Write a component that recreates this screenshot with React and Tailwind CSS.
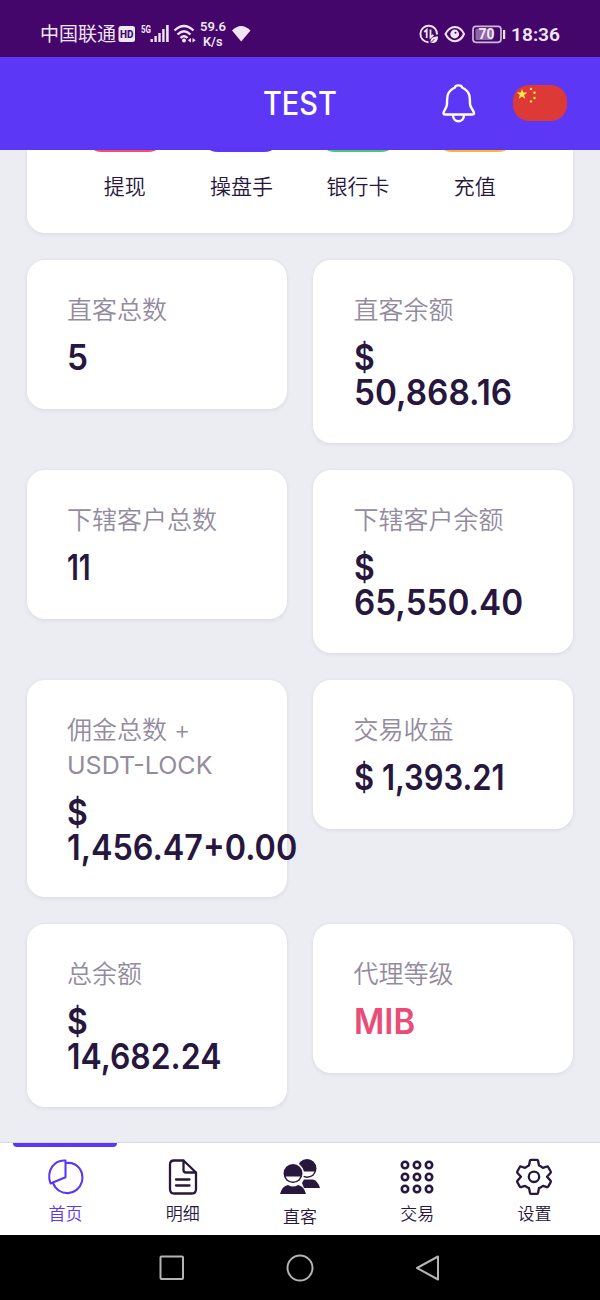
import React, { useLayoutEffect, useRef } from "react";

const cards = [
  [
    { label: ["直客总数"], value: [["5", 20]], h: "h-[149px]" },
    { label: ["直客余额"], value: [["$", 20], ["50,868.16", 157]], h: "h-[183px]" },
  ],
  [
    { label: ["下辖客户总数"], value: [["11", 23]], h: "h-[149px]" },
    { label: ["下辖客户余额"], value: [["$", 20], ["65,550.40", 168]], h: "h-[183px]" },
  ],
  [
    { label: ["佣金总数 +", "USDT-LOCK"], value: [["$", 20], ["1,456.47+0.00", 229]], h: "h-[217.4px]" },
    { label: ["交易收益"], value: [["$ 1,393.21", 150]], h: "h-[149px]" },
  ],
  [
    { label: ["总余额"], value: [["$", 20], ["14,682.24", 153]], h: "h-[183px]" },
    { label: ["代理等级"], value: [["MIB", 60]], h: "h-[149px]", pink: true },
  ],
];

/* Single line of text, scaled horizontally to a given width. */
function Fit({ text, width, className }) {
  const ref = useRef(null);
  useLayoutEffect(() => {
    const el = ref.current;
    el.style.transform = `scaleX(${width / el.offsetWidth})`;
  }, [width, text]);
  return (
    <div>
      <span ref={ref} className={`inline-block origin-left whitespace-pre align-top ${className}`}>
        {text}
      </span>
    </div>
  );
}

function Card({ card }) {
  return (
    <section className={`w-[260px] shrink-0 rounded-[18px] bg-white pl-[40.5px] pt-[33px] shadow-[0_1px_4px_rgba(39,23,62,0.10)] ${card.h}`}>
      <div className="text-[25px] font-[350] leading-[35px] text-[#938b9e]">
        {card.label.map((t) =>
          t === "USDT-LOCK" ? (
            <Fit key={t} text={t} width={145} className="text-[24.5px] font-normal leading-[35px]" />
          ) : (
            <div key={t} className="whitespace-pre">
              {t}
            </div>
          ),
        )}
      </div>
      <div className={`pt-[12px] ${card.pink ? "text-[#ea4c77]" : "text-[#27173e]"}`}>
        {card.value.map(([t, w]) => (
          <Fit key={t} text={t} width={w + 1} className="h-[35px] text-[35px] font-semibold leading-[35px]" />
        ))}
      </div>
    </section>
  );
}

function StatusBar() {
  return (
    <div className="flex h-[57px] shrink-0 bg-[#45066b] pl-[40px] pt-[22px] text-[#eee6f4]">
      <div className="w-[78px] whitespace-nowrap text-[19px] leading-[25px]">中国联通</div>
      <svg width="134" height="30" viewBox="118 22 134 30" fill="currentColor" className="overflow-visible">
        <rect x="118.500" y="26" width="16.500" height="16" rx="2.500" />
        <text x="120" y="38" fontSize="10.500" fontWeight="800" textLength="13.500" lengthAdjust="spacingAndGlyphs" fill="#45066b" fontFamily="Roboto">HD</text>
        <text x="141" y="33" fontSize="10" fontWeight="700" textLength="10" lengthAdjust="spacingAndGlyphs" fontFamily="Roboto">5G</text>
        <path d="M150.500 39h2.400v3h-2.400zM154.400 36h2.400v6h-2.400zM158.300 33h2.400v9h-2.400zM162.200 29h2.400v13h-2.400zM166.100 25h2.600v17h-2.600z" />
        <g fill="none" stroke="currentColor" strokeWidth="2.300">
          <path d="M174.500 30.500Q184 21.500 193.500 30.500M177.500 34.500Q184 28 190.500 34.500M180.500 38Q184 34.500 187.500 38" />
        </g>
        <circle cx="184" cy="40.500" r="2" />
        <path d="m191 38-3.200 2.200 3.200 2.200zm1.500 0 3.200 2.200-3.200 2.200z" />
        <g fontSize="12.500" fontWeight="600" fontFamily="Roboto">
          <text x="200" y="31" textLength="26" lengthAdjust="spacingAndGlyphs">59.6</text>
          <text x="203" y="46" textLength="19.500" lengthAdjust="spacingAndGlyphs">K/s</text>
        </g>
        <path d="M232 30.500Q241 21.500 250.500 30.500L241.200 41.500Z" />
      </svg>
      <svg width="145" height="30" viewBox="418 22 145 30" fill="currentColor" className="ml-[166px]">
        <path d="M437 34.500A8.300 8.300 0 1 0 428.500 42.300" fill="none" stroke="currentColor" strokeWidth="1.900" />
        <path d="m424.300 32 2.400-2.200V38M430.500 29.500v8l2.900-2.700" fill="none" stroke="currentColor" strokeWidth="1.800" />
        <path d="M430.500 43c-.500-4.500 2-6.500 7.500-6.500 0 5-2.500 7-7.500 6.500Z" />
        <path d="m430 43.500 4.500-4.500" stroke="#45066b" strokeWidth=".8" />
        <path d="M445.500 34C450 24.500 460 24.500 464 34 460 43.500 450 43.500 445.500 34Z" fill="none" stroke="currentColor" strokeWidth="2" />
        <circle cx="454.700" cy="34" r="4.400" />
        <circle cx="455.500" cy="32.700" r="1" fill="#45066b" />
        <rect x="473" y="26.300" width="28" height="16" rx="3" fill="none" stroke="currentColor" strokeOpacity=".8" strokeWidth="1.700" />
        <rect x="475.500" y="28.700" width="17" height="11.300" rx="1" fillOpacity=".43" />
        <path d="M503 30h2.200v9H503z" />
        <text x="478.500" y="39" fontSize="14" fontWeight="700" fontFamily="Roboto" textLength="16" lengthAdjust="spacingAndGlyphs">70</text>
        <text x="511" y="41" fontSize="19" fontWeight="600" fontFamily="Roboto" textLength="49" lengthAdjust="spacingAndGlyphs">18:36</text>
      </svg>
    </div>
  );
}

function Header() {
  return (
    <header className="flex h-[93px] shrink-0 items-center bg-[#5c38f6] pb-px">
      <h1 className="ml-[263px] w-[177px] pt-[2px] text-white">
        <Fit text="TEST" width={74} className="text-[32px] font-medium leading-[36px]" />
      </h1>
      <svg width="38" height="42" viewBox="440 82 38 42" fill="none" stroke="white" strokeWidth="2.400" strokeLinejoin="round">
        <path d="M455 87.500C455 84.600 462 84.600 462 87.500 470 91 470 97 470 104 470 108 474 110.500 474 113Q474 114.500 472 114.500H445Q443.500 114.500 443.500 113C443.500 110.500 447 108 447 104 447 97 447 91 455 87.500Z" />
        <path d="M453 115C453 123.300 464 123.300 464 115" />
      </svg>
      <svg width="54" height="36" viewBox="0 0 54 36" className="ml-[35px]">
        <rect width="54" height="36" rx="16" fill="#dd3937" />
        <g fill="#fff044">
          <path d="m9 4 1.300 3.600h3.900l-3.100 2.300 1.200 3.800L9 11.400l-3.300 2.300L6.900 9.900 3.800 7.600h3.900Z" />
          <circle cx="18" cy="4" r="1.200" />
          <circle cx="21.500" cy="7.700" r="1.200" />
          <circle cx="21.500" cy="13" r="1.200" />
          <circle cx="18" cy="16.500" r="1.200" />
        </g>
      </svg>
    </header>
  );
}

const shortcuts = [
  ["提现", "bg-[#fb4967]"],
  ["操盘手", "bg-[#5c38f6]"],
  ["银行卡", "bg-[#47c878]"],
  ["充值", "bg-[#ffb52e]"],
];

function NavIcon({ kind }) {
  const common = { width: 42, height: 38, viewBox: "0 0 42 38", fill: "none", stroke: "currentColor", strokeWidth: 2.3, strokeLinejoin: "round", strokeLinecap: "round" };
  if (kind === "pie")
    return (
      <svg {...common} strokeWidth="2.100">
        <path d="M20.500 2.500C9 1.500 1 13 5.500 25.500L20.500 19.300ZM21.500 5C33 4 39 13.500 37 23.500 33 38 14 39.500 8 25" />
      </svg>
    );
  if (kind === "doc")
    return (
      <svg {...common}>
        <path d="M21.500 2.500H12Q8 2.500 8 6.500V31Q8 35.500 12 35.500H30Q34 35.500 34 31V14.500ZM21.500 2.500V12Q21.500 14.500 24 14.500H34M14 21.500H27.500M14 27.500H27.500" />
      </svg>
    );
  if (kind === "people")
    return (
      <svg {...common} viewBox="279 1158 42 38" fill="currentColor" stroke="none">
        <circle cx="307" cy="1168.500" r="9.500" />
        <path d="M300 1171.500H314.500Q312.500 1176.300 307 1176.500 302 1176.300 300 1171.500Z" fill="white" />
        <path d="M302 1183 304 1179.500H313Q318 1181 320 1188H304Z" />
        <circle cx="293" cy="1173.500" r="11" fill="white" />
        <circle cx="293" cy="1173.500" r="9.500" />
        <path d="M285.700 1176.500H300.300Q298.500 1181.500 293 1181.500 287.500 1181.500 285.700 1176.500Z" fill="white" />
        <path d="M280 1194Q282 1186 288 1185 293 1188 298 1185 304 1186 306 1194Z" />
      </svg>
    );
  if (kind === "grid")
    return (
      <svg {...common} strokeWidth="2.600">
        {[7, 19, 31].flatMap((y) => [9, 21, 33].map((x) => <circle key={`${x}-${y}`} cx={x} cy={y} r="3.200" />))}
      </svg>
    );
  return (
    <svg {...common}>
      <path d="M17 2.500Q17 1.800 18 1.800H24Q25 1.800 25 2.500L26 7.500Q28 8.300 30 9.800L34 8.500Q34.800 8.300 35.300 9.200L37.700 13.500Q38.200 14.400 37.500 15L34 18.800 37.500 22.600Q38.200 23.200 37.700 24.100L35.300 28.400Q34.800 29.300 34 29.100L30 27.800Q28 29.300 26 30.100L25 35Q25 35.800 24 35.800H18Q17 35.800 17 35L16 30.100Q14 29.300 12 27.800L8 29.100Q7.200 29.300 6.700 28.400L4.300 24.100Q3.800 23.200 4.500 22.600L8 18.800 4.500 15Q3.800 14.400 4.300 13.500L6.700 9.200Q7.200 8.300 8 8.500L12 9.800Q14 8.300 16 7.500Z" />
      <circle cx="21" cy="18.800" r="5.200" />
    </svg>
  );
}

export default function App() {
  return (
    <div className="flex h-[1300px] w-[600px] flex-col overflow-hidden bg-[#ecedf3] font-['Inter','Noto_Sans_CJK_SC',sans-serif] text-[#27173e]">
      <StatusBar />
      <Header />
      <main className="h-[992px] shrink-0 pl-[26.5px]">
        <section className="h-[83px] w-[546.5px] rounded-b-[18px] bg-white px-[40px] shadow-[0_1px_4px_rgba(39,23,62,0.10)]">
          <div className="grid grid-cols-4">
            {shortcuts.map(([name, tone]) => (
              <div key={name} className="flex flex-col items-center">
                <div className="flex h-[2px] items-end overflow-hidden">
                  <div className={`h-[82px] w-[82px] shrink-0 rounded-[18px] ${tone}`} />
                </div>
                <div className="pt-[20px] text-[21px] font-[350] leading-[30px]">{name}</div>
              </div>
            ))}
          </div>
        </section>
        <div className="flex flex-col gap-[27px] pt-[27px]">
          {cards.map((row, i) => (
            <div key={i} className="flex items-start gap-[26.5px]">
              {row.map((card) => (
                <Card key={card.label[0]} card={card} />
              ))}
            </div>
          ))}
        </div>
      </main>
      <nav className="grid h-[93px] shrink-0 grid-cols-5 border-t border-[#d9d7e5] bg-white px-[7px]">
        {[
          ["首页", "pie"],
          ["明细", "doc"],
          ["直客", "people"],
          ["交易", "grid"],
          ["设置", "gear"],
        ].map(([name, kind], i) => (
          <div key={name} className={`flex flex-col items-center ${i === 0 ? "text-[#5c38f6]" : ""}`}>
            <div className={`mb-[11px] h-[4px] w-[104px] rounded-b-[4px] ${i === 0 ? "mr-px bg-[#5c38f6]" : ""}`} />
            <NavIcon kind={kind} />
            <div className={`text-[17px] font-[350] leading-[24px] ${kind === "people" ? "pt-[9px]" : "pt-[6px]"}`}>{name}</div>
          </div>
        ))}
      </nav>
      <div className="flex h-[65px] shrink-0 items-center bg-black pl-[159px]">
        <svg width="282" height="30" viewBox="0 0 282 30" fill="none" stroke="#b4b4b4" strokeWidth="2" strokeLinejoin="round">
          <rect x="1.500" y="3.500" width="22.500" height="22.500" rx="1" />
          <circle cx="141" cy="15" r="12.500" />
          <path d="M279 3.500 258 15 279 26.500Z" />
        </svg>
      </div>
    </div>
  );
}
